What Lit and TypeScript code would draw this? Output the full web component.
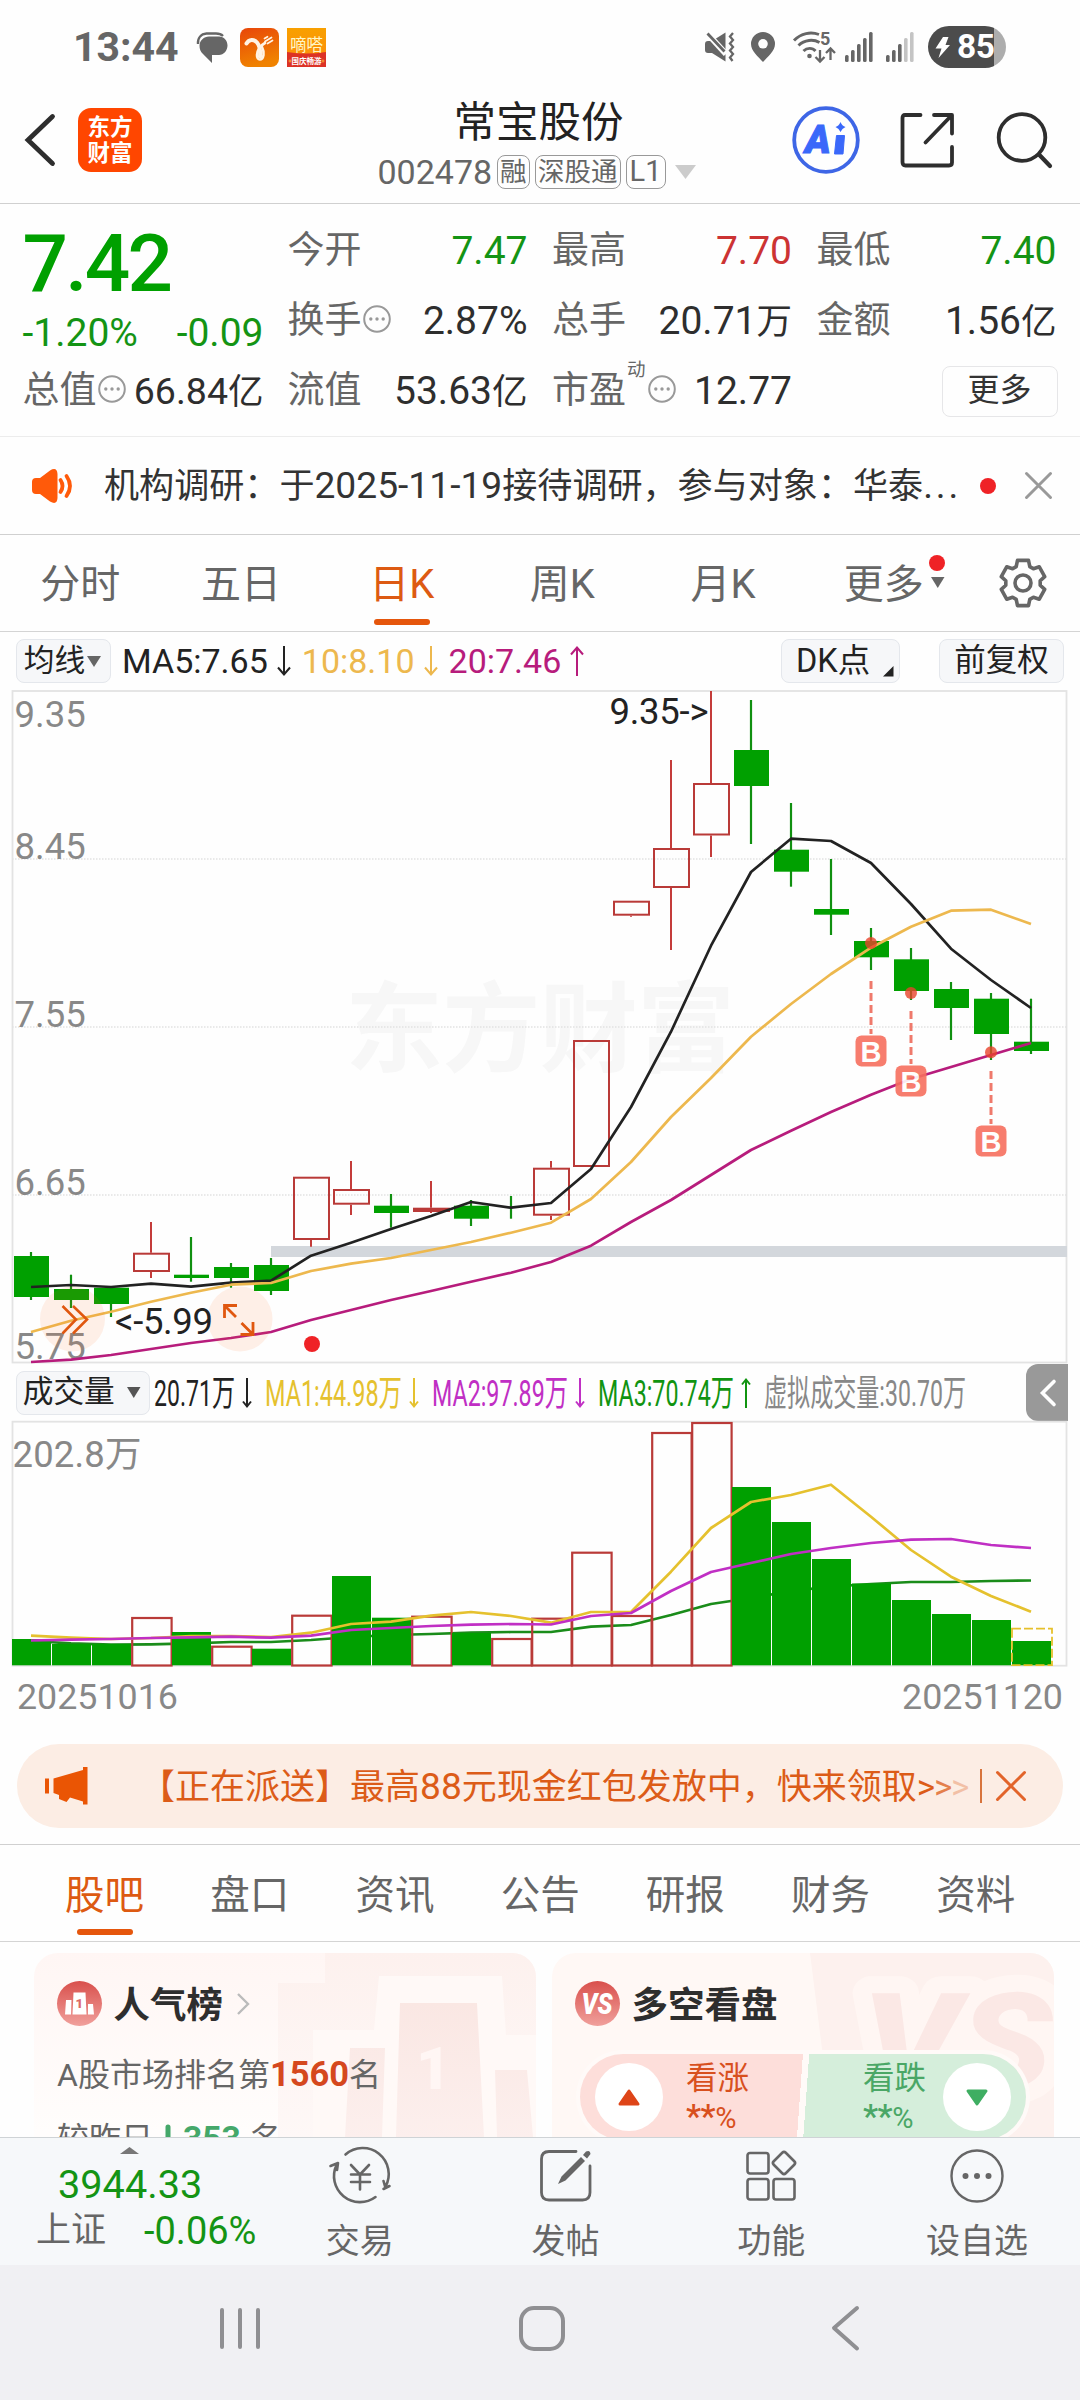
import { LitElement, html, svg, css } from "lit";
import { customElement } from "lit/decorators.js";

const GREEN = "#00a000";
const RED = "#b93a38";
const STEP = 40;
const FIRST = 31;
const cx = (i: number) => FIRST + STEP * i;

type Candle = [up: boolean, high: number, top: number, bottom: number, low: number];

const CANDLES: Candle[] = [
  [false, 1252, 1256, 1297, 1300],
  [false, 1274.7, 1289, 1300, 1308],
  [false, 1287.7, 1287.7, 1304, 1317],
  [true, 1222, 1252.7, 1272, 1278],
  [false, 1237, 1274.7, 1278, 1281.7],
  [false, 1263, 1267, 1278, 1287.7],
  [false, 1258, 1265, 1291, 1295],
  [true, 1176.7, 1176.7, 1240, 1246.7],
  [true, 1161, 1189, 1204.7, 1215],
  [false, 1194, 1205.7, 1213, 1227.7],
  [true, 1181, 1207.7, 1212, 1213],
  [false, 1200, 1205.7, 1218.7, 1226],
  [false, 1196, 1207, 1208, 1218.7],
  [true, 1161, 1167.7, 1215.7, 1220],
  [true, 1040, 1040, 1167, 1167],
  [true, 900.7, 900.7, 915.7, 916.7],
  [true, 760, 848, 888, 950],
  [true, 691, 783, 835.5, 857],
  [false, 700, 750, 786, 844],
  [false, 803, 849.7, 871.7, 886.7],
  [false, 859, 909, 914.7, 935],
  [false, 928, 941, 957.3, 970],
  [false, 948, 959.3, 991, 1000],
  [false, 982, 989, 1008, 1040],
  [false, 993, 998.7, 1034, 1060],
  [false, 998.7, 1041.7, 1051, 1054],
];

const MA5 = [1287, 1285, 1287, 1283.7, 1286.7, 1282.7, 1280.7, 1255.7, 1242.7, 1229, 1216, 1202, 1207.7, 1203, 1169, 1107, 1031.7, 945.7, 872, 838.7, 841, 863, 904, 948.7, 980, 1008];
const MA10 = [1332, 1320.7, 1311.7, 1301.7, 1292.7, 1284.7, 1283, 1271, 1263.7, 1258, 1250, 1242, 1232.7, 1222.7, 1199, 1162, 1117, 1078, 1036.7, 1004, 974, 947.7, 926.7, 910.7, 909.7, 924];
const MA20 = [1362, 1359.7, 1355, 1349, 1343, 1338, 1332, 1320, 1310, 1300, 1291, 1281.7, 1272.7, 1262, 1245.7, 1222, 1200, 1175, 1150, 1130.7, 1112, 1094.7, 1079, 1067, 1055, 1043];

const VOLUMES: [up: boolean, top: number][] = [
  [false, 1639], [false, 1644], [false, 1644], [true, 1617], [false, 1632], [true, 1645.7], [false, 1648.7],
  [true, 1614.7], [false, 1576], [false, 1617.7], [true, 1615.7], [false, 1633], [true, 1638], [true, 1617.7],
  [true, 1551.7], [true, 1615], [true, 1432], [true, 1422], [false, 1487], [false, 1522], [false, 1559],
  [false, 1583.5], [false, 1600], [false, 1614], [false, 1620], [false, 1641],
];
const VMA1 = [1635.7, 1637.7, 1639, 1638, 1636, 1636, 1637, 1632.7, 1624, 1621.7, 1615.7, 1612, 1616, 1622.7, 1612, 1612, 1571.7, 1528, 1502, 1495, 1484.7, 1516.7, 1550, 1576.7, 1596, 1611.7];
const VMA2 = [1640.5, 1639.7, 1639, 1638, 1637.3, 1636.7, 1637.7, 1635.7, 1630, 1628, 1626, 1624.7, 1624, 1624.5, 1616, 1613, 1591, 1572, 1563, 1554, 1548, 1543, 1539.7, 1539, 1545, 1548];
const VMA3 = [1641, 1643.3, 1644.7, 1644.3, 1643.3, 1642, 1642, 1640, 1637, 1635, 1634, 1632.7, 1632, 1632, 1626.7, 1625, 1615, 1604, 1598, 1591, 1586.7, 1584, 1582, 1582, 1581, 1580.5];

const line = (ys: number[], color: string) =>
  svg`<polyline points=${ys.map((y, i) => `${cx(i)},${y}`).join(" ")} fill="none" stroke=${color} stroke-width="2.7" stroke-linejoin="round"/>`;

const arrow = (up: boolean, color: string, w: number) => {
  const h = 30;
  const d = up
    ? `M${w / 2} ${h} V1.5 M1 ${1.5 + w / 2} L${w / 2} 1.5 L${w - 1} ${1.5 + w / 2}`
    : `M${w / 2} 0 V${h - 1.5} M1 ${h - 1.5 - w / 2} L${w / 2} ${h - 1.5} L${w - 1} ${h - 1.5 - w / 2}`;
  return html`<svg class="arrow" width=${w} height=${h} viewBox="0 0 ${w} ${h}"><path d=${d} fill="none" stroke=${color} stroke-width="2"/></svg>`;
};

const caret = (w: number, h: number, color: string) =>
  html`<svg width=${w} height=${h} viewBox="0 0 ${w} ${h}"><path d="M0 0H${w}L${w / 2} ${h}Z" fill=${color}/></svg>`;

@customElement("price-chart")
export class PriceChart extends LitElement {
  static styles = css`
    :host { display: block; height: 675px; }
    svg { display: block; overflow: visible; }
    .axis { font-size: 36.5px; fill: #888; }
    .note { font-size: 36.5px; fill: #222; }
    .mark { font-size: 98px; font-weight: 700; fill: #f7f7f7; }
    .flag { font-size: 29px; font-weight: 700; fill: #fff; font-family: "Liberation Sans", Arial, sans-serif; }
  `;

  private candle([up, high, top, bottom, low]: Candle, i: number) {
    const x = cx(i);
    if (up) {
      const thin = bottom - top < 6;
      return svg`
        <path d="M${x} ${high}V${top}M${x} ${bottom}V${low}" stroke="#c43c3a" stroke-width="2"/>
        <rect x=${x - 17} y=${top + 1} width="35" height=${bottom - top - 2} fill=${thin ? "#c43c3a" : "none"} stroke=${RED} stroke-width="2"/>`;
    }
    const doji = bottom - top < 2;
    return svg`
      <path d="M${x} ${high}V${low}" stroke="#109010" stroke-width="2.2"/>
      ${doji ? "" : svg`<rect x=${x - 17} y=${top} width="35" height=${bottom - top} fill=${GREEN}/>`}`;
  }

  private signal(x: number, dot: number, from: number) {
    return svg`
      <circle cx=${x} cy=${dot} r="6" fill="#e8432c" fill-opacity="0.8"/>
      <path d="M${x} ${from}V${from + 53}" stroke="#ef7a6c" stroke-width="3" stroke-dasharray="8 4"/>
      <g opacity="0.9">
        <rect x=${x - 15.5} y=${from + 54.5} width="31" height="31" rx="6" fill="#f7705f"/>
        <text class="flag" x=${x} y=${from + 80.5} text-anchor="middle">B</text>
      </g>`;
  }

  render() {
    return html`<svg width="1080" height="675" viewBox="0 690 1080 675">
      <text class="mark" x="345" y="1064" textLength="390">东方财富</text>
      <rect x="12.5" y="691" width="1054" height="671.5" fill="none" stroke="#e3e3e3" stroke-width="1.8"/>
      ${[859, 1027, 1195].map((y) => svg`<path d="M12 ${y}H1067" stroke="#e2e2e2" stroke-width="1.5" stroke-dasharray="1.5 1.5"/>`)}
      <text class="axis" x="14.5" y="726.5">9.35</text>
      <text class="axis" x="14.5" y="859">8.45</text>
      <text class="axis" x="14.5" y="1026.7">7.55</text>
      <text class="axis" x="14.5" y="1195">6.65</text>
      <text class="axis" x="14.5" y="1359">5.75</text>
      <rect x="271" y="1246" width="796" height="11" fill="#d3d7dc"/>
      ${CANDLES.map((c, i) => this.candle(c, i))}
      ${line(MA5, "#222")} ${line(MA10, "#edb84e")} ${line(MA20, "#b71c7c")}
      ${this.signal(871, 943, 981)} ${this.signal(911, 993, 1011)} ${this.signal(991, 1052.3, 1071)}
      <circle cx="72.5" cy="1319" r="32.5" fill="#fc6b21" fill-opacity="0.1"/>
      <path d="M62.5 1306l13.5 13.5-13.5 14M73 1306l14 13.5-14 14" fill="none" stroke="#e0570f" stroke-width="2.6"/>
      <circle cx="240" cy="1319" r="32.5" fill="#fc6b21" fill-opacity="0.1"/>
      <path d="M224.5 1318v-12.5H237M225 1306l11 11M253 1322v12.5H240.5M241.5 1323l11 11" fill="none" stroke="#e0570f" stroke-width="2.8"/>
      <text class="note" x="115" y="1333.5" textLength="98">&lt;-5.99</text>
      <text class="note" x="609.5" y="724.3" textLength="99">9.35-&gt;</text>
      <circle cx="312" cy="1344" r="8" fill="#ef2226"/>
    </svg>`;
  }
}

@customElement("volume-chart")
export class VolumeChart extends LitElement {
  static styles = css`
    :host { display: block; height: 248px; }
    svg { display: block; overflow: visible; }
    .axis { font-size: 36.5px; fill: #888; }
  `;
  render() {
    return html`<svg width="1080" height="248" viewBox="0 1420 1080 248">
      <rect x="12.5" y="1421.7" width="1054" height="244" fill="none" stroke="#e3e3e3" stroke-width="1.8"/>
      <text class="axis" x="12.5" y="1466.7" textLength="129">202.8万</text>
      ${line(VMA3, "#1a8c1a")}
      ${VOLUMES.map(([up, top], i) => {
        const x = 11.8 + STEP * i;
        return up
          ? svg`<rect x=${x + 0.4} y=${top + 1} width="39.4" height=${1664.5 - top} fill="none" stroke=${RED} stroke-width="2.2"/>`
          : svg`<rect x=${x + 0.2} y=${top} width="39" height=${1665.3 - top} fill=${GREEN}/>`;
      })}
      <rect x="1012" y="1628.7" width="40" height="36.5" fill="none" stroke="#e6c02c" stroke-width="1.8" stroke-dasharray="9 3"/>
      ${line(VMA1, "#e5c12e")} ${line(VMA2, "#c02fc4")}
    </svg>`;
  }
}

const MORE_DOTS = html`<svg class="dots" width="28" height="28" viewBox="0 0 28 28">
  <circle cx="14" cy="14" r="12.8" fill="none" stroke="#999" stroke-width="2"/>
  <circle cx="7.8" cy="14" r="1.7" fill="#999"/><circle cx="14" cy="14" r="1.7" fill="#999"/><circle cx="20.2" cy="14" r="1.7" fill="#999"/>
</svg>`;

const gearPath = (() => {
  const pts: string[] = [];
  for (let k = 0; k < 6; k++) {
    for (const [da, r] of [[-23, 17.3], [-14, 22.6], [14, 22.6], [23, 17.3]]) {
      const a = ((k * 60 - 90 + da) * Math.PI) / 180;
      pts.push(`${(24 + r * Math.cos(a)).toFixed(1)} ${(25 + r * 1.03 * Math.sin(a)).toFixed(1)}`);
    }
  }
  return `M${pts.join("L")}Z`;
})();

@customElement("app-root")
export class AppRoot extends LitElement {
  static styles = css`
    :host {
      display: flex; flex-direction: column; width: 1080px; height: 2400px; overflow: hidden;
      background: #fefefe; color: #333; line-height: 1.2;
      font-family: Roboto, "Noto Sans CJK SC", sans-serif;
    }
    * { box-sizing: border-box; }
    svg { display: block; flex: none; overflow: visible; }
    div, section, header, nav { flex: none; }
    .row { display: flex; align-items: center; white-space: nowrap; }

    .status { height: 94px; padding: 0 74px 0 73px; color: #666; }
    .time { width: 123px; font-size: 41px; font-weight: 700; line-height: 94px; }
    .app { width: 39px; height: 39px; margin-left: 12px; }
    .app2 { margin-left: 8px; }
    .right { margin-left: auto; }
    .battery {
      width: 78px; height: 42px; margin-left: 14px; border-radius: 21px; padding-left: 7px; color: #fff;
      font-size: 33.5px; font-weight: 700; background: linear-gradient(90deg, #4c4c4c 66px, #adadad 66px);
    }
    .battery span { margin-left: 7px; letter-spacing: -0.5px; }

    .head { display: flex; height: 110px; border-bottom: 1px solid #d0d0d0; padding: 0 28px 0 25px; justify-content: space-between; }
    .side { height: 92px; }
    .left { width: 300px; }
    .logo {
      width: 64px; height: 64px; margin-left: 23px; padding-top: 6px; border-radius: 13px; background: #ff4600;
      color: #fff; font-size: 22.5px; line-height: 26px; font-weight: 700; text-align: center; white-space: normal;
    }
    .tools { width: 300px; justify-content: flex-end; }
    .title { font-size: 42.5px; line-height: 53px; padding-top: 2px; color: #222; text-align: center; }
    .code { margin-top: 6px; height: 34px; justify-content: center; margin-left: -4px; color: #666; font-size: 34px; line-height: 34px; }
    .tag { height: 34px; margin-left: 4.5px; padding: 0 2.5px; border: 1.5px solid #999; border-radius: 8px; font-size: 26.5px; line-height: 31px; }
    .tag.l { font-size: 29px; padding: 0 3px; }

    .quote { height: 233px; padding: 12px 22px 0 22.5px; display: flex; gap: 24px; border-bottom: 1px solid #ececec; font-size: 39px; }
    .now { width: 241px; }
    .price { font-size: 80px; font-weight: 500; line-height: 97px; height: 94px; color: #00a000; letter-spacing: -2.7px; }
    .chg { height: 46px; justify-content: space-between; color: #149414; }
    .grid { flex: 1; display: grid; grid-template-columns: repeat(3, 240px); grid-auto-rows: 70px; column-gap: 24.5px; }
    .cell { height: 70px; justify-content: space-between; }
    .k { color: #666; font-size: 37px; display: flex; align-items: center; }
    .v { color: #2e2e2e; }
    .u { font-size: 35.5px; }
    .now .v { font-size: 37.5px; }
    .down { color: #149414; }
    .up { color: #cc3333; }
    .cell .dots { margin: -4px 0 0 1px; }
    .sup { font-size: 18.5px; align-self: flex-start; margin: -10px 1px 0 1px; }
    .more { width: 116px; height: 51px; border: 1.5px solid #e6e6e8; border-radius: 8px; font-size: 32px; line-height: 47px; text-align: center; margin-left: auto; position: relative; right: -1px; }

    .news { height: 98px; border-bottom: 1px solid #d0d0d0; padding: 0 29px 0 32px; font-size: 35px; color: #333; }
    .news .txt { margin-left: 31px; width: 876px; font-size: 35.1px; }
    .n { font-size: 37.2px; }
    .etc { letter-spacing: 2.8px; }
    .dot { width: 16px; height: 16px; border-radius: 50%; background: #ef2226; }
    .news svg:last-child { margin-left: 29px; }

    .tabs { height: 97px; border-bottom: 1px solid #d4d4d4; color: #666; font-size: 40px; }
    .tab { position: relative; width: 160.7px; text-align: center; line-height: 100px; height: 96px; }
    .tab.on, .tab2.on { color: #dd5a12; }
    .tab.on::after, .tab2.on::after {
      content: ""; position: absolute; left: 50%; bottom: 6px; width: 56px; height: 6px; margin-left: -28px; border-radius: 3px; background: #e5560c;
    }
    .badge { position: absolute; left: 126px; top: 20px; }
    .badge svg { margin: 6px 0 0 2px; }
    .gear { margin-left: 35px; }

    .chip { display: flex; align-items: center; justify-content: center; height: 44px; border: 1.5px solid #e4e7ec; border-radius: 8px; background: #f6f7f9; color: #222; font-size: 30.7px; }
    .ma { height: 58px; padding: 0 16px; font-size: 34px; }
    .ma .arrow { margin: 0 11px 0 9px; }
    .avg { width: 95px; margin-right: 11px; gap: 2px; padding-right: 2px; }
    .dk { width: 119px; margin-left: auto; font-size: 32.5px; justify-content: flex-start; padding-left: 14px; position: relative; }
    .dk svg { position: absolute; right: 6px; bottom: 6px; }
    .fq { width: 125px; margin-left: 39px; font-size: 31.5px; }

    .vol { height: 55px; padding: 0 12px 0 16px; font-size: 36px; }
    .vol .arrow { margin: 0 13px 0 7px; }
    .vchip { width: 134px; margin-right: 4px; gap: 12px; padding-right: 3px; }
    .fold { width: 42px; height: 57px; margin-left: auto; border-radius: 12px 0 0 12px; background: #999; justify-content: center; }

    .dates { height: 58px; padding: 0 17px 0 17px; justify-content: space-between; color: #888; font-size: 35.8px; }
    .promo { height: 84px; margin: 18px 17px 16px; padding: 0 37px 0 28px; border-radius: 42px; background: #fcede4; color: #dc5c18; font-size: 35px; }
    .promo .txt { margin-left: 52px; width: 832px; }
    .gt { letter-spacing: -1.2px; }
    .f2 { opacity: 0.75; }
    .f3 { opacity: 0.3; }
    .sep { width: 1.5px; height: 34px; margin: 0 14.5px 0 8px; background: #d8743c; }

    .tabs2 { height: 98px; border-top: 1px solid #d0d0d0; border-bottom: 1px solid #d4d4d4; padding-left: 32px; color: #666; font-size: 39.5px; }
    .tab2 { position: relative; width: 145.2px; height: 96px; line-height: 102px; text-align: center; }

    .cards { display: flex; gap: 16px; height: 195px; padding: 11px 26px 0 34px; overflow: hidden; }
    .card { position: relative; width: 502px; height: 260px; padding: 28px 0 0 23px; border-radius: 24px; overflow: hidden; background: linear-gradient(#fff6f4, #fffdfc 180px); }
    .card.b { background: #fff8f5; }
    .decor { position: absolute; left: 0; top: 0; }
    .ct { position: relative; height: 45px; font-size: 36.5px; font-weight: 700; color: #2e2e2e; }
    .ct span { margin-left: 11.5px; padding-top: 5px; }
    .ct svg + span + svg { margin-left: 14px; }
    .rank { position: relative; margin-top: 27px; height: 44px; font-size: 32px; color: #666; }
    .rank b { color: #d5481e; font-size: 34.5px; }
    .rank.r2 { margin-top: 20px; }
    .rank.r2 b { color: #45a86a; margin: 0 9px 0 9px; font-size: 33.5px; }
    .rank.r2 svg { margin-left: 9px; }
    .pill {
      position: relative; width: 446px; height: 86px; margin: 28px 0 0 5px; border-radius: 43px; padding: 0 15px; font-size: 31.5px;
      box-shadow: 0 0 0 4px #fffaf8;
      background: linear-gradient(94.1deg, #fddeda 49.3%, #fffaf8 49.3% 50.7%, #d5eedb 50.7%);
    }
    .knob { width: 68px; height: 68px; border-radius: 50%; background: #fff; display: flex; align-items: center; justify-content: center; }
    .bull { color: #d8501e; margin-left: 23px; line-height: 37px; padding-top: 3px; }
    .bear { color: #4aa766; margin: 0 17px 0 auto; line-height: 37px; padding-top: 3px; }
    .pct { font-size: 29px; line-height: 38px; }
    .pct i { font-style: normal; font-size: 34px; font-weight: 500; letter-spacing: -0.5px; }

    .bar { display: flex; height: 128px; border-top: 1px solid #cfd3d6; background: #f6f8fa; color: #666; font-size: 34px; }
    .index { width: 257px; height: 127px; position: relative; }
    .index .c { margin: 9px 0 0 120px; }
    .index .p { color: #149414; font-size: 39.7px; line-height: 46px; margin: 8px 0 0 58px; }
    .index .q { font-size: 35px; line-height: 46px; padding-left: 36px; }
    .index .q span { color: #149414; font-size: 38px; margin-left: 38px; }
    .act { width: 205.7px; display: flex; flex-direction: column; align-items: center; padding-top: 10px; }
    .act div { margin-top: 16px; line-height: 43px; }
    .nav { height: 135px; background: #f0f0f3; padding: 0 0 7px 218px; }
  `;

  private squeezed(text: string, w: number, color: string) {
    return html`<svg width=${w} height="44" viewBox="0 0 ${w} 44"><text x="0" y="34.8" font-size="36" fill=${color} textLength=${w} lengthAdjust="spacingAndGlyphs">${text}</text></svg>`;
  }

  private bars(active: number) {
    return html`<svg width="28" height="30" viewBox="0 0 28 30" style="margin-left:${active > 3 ? 9 : 13}px">
      ${[23, 18, 12, 6, 0].map((y, i) => svg`<rect x=${i * 6} y=${y} width="3.6" height=${30 - y} rx="1.5" fill=${i < active ? "#666" : "#c4c4c4"}/>`)}
    </svg>`;
  }

  private cell(k: unknown, v: string, cls = "v") {
    const unit = /[万亿]$/.test(v) ? v.slice(-1) : "";
    const num = unit ? v.slice(0, -1) : v;
    return html`<div class="row cell"><span class="k">${k}</span><span class=${cls}>${num}${unit ? html`<span class="u">${unit}</span>` : ""}</span></div>`;
  }

  render() {
    return html`
      <div class="row status">
        <div class="time">13:44</div>
        <svg width="32" height="31" viewBox="0 0 32 31">
          <path d="M2 12C1.500 6 5 2 10.500 1.500h9.500c3.500 0 5.500 1 7 2.500" fill="none" stroke="#666" stroke-width="2.400"/>
          <path d="M13 4.500h10c5 0 8.500 4 8.500 9s-3.800 9.500-8.500 9.500h-7v8L7 22C4.500 20 3.500 17 3.500 13.500c0-5 4.500-9 9.500-9Z" fill="#666"/>
        </svg>
        <svg class="app" viewBox="0 0 39 39">
          <defs><linearGradient id="a" x1="0" y1="0" x2="0.300" y2="1"><stop offset="0" stop-color="#e8460a"/><stop offset="1" stop-color="#f08200"/></linearGradient></defs>
          <rect width="39" height="39" rx="8" fill="url(#a)"/>
          <path d="M6.500 15.500C9 11 14 11 17 14.500c2.500 3 3.500 8 3 14" fill="none" stroke="#fff3e4" stroke-width="4" stroke-linecap="round"/>
          <path d="M25 15c-4.500 2.500-7.500 7-8 12-.300 6 5.500 6 6.500 0 .500-3-.500-6-1.500-8" fill="none" stroke="#fff3e4" stroke-width="2.600" stroke-linecap="round"/>
          <path d="M25 13.500l6.500-4M27.500 15.500l5-3M24.500 10.500l3-1.800" stroke="#fff3e4" stroke-width="1.700" stroke-linecap="round"/>
        </svg>
        <svg class="app app2" viewBox="0 0 39 39">
          <defs><linearGradient id="d" x1="0" y1="0" x2="0" y2="1"><stop offset="0" stop-color="#f8a000"/><stop offset="1" stop-color="#ff8a10"/></linearGradient></defs>
          <rect width="39" height="39" fill="url(#d)"/>
          <path d="M0 24q19.500 3 39 0v15H0Z" fill="#dc3226"/>
          <text x="19.500" y="22.500" font-size="16.500" fill="#fff6c8" text-anchor="middle">嘀嗒</text>
          <text x="19.500" y="36" font-size="7.500" font-weight="700" fill="#fff" text-anchor="middle">国庆畅游</text>
          <path d="M1.500 33h3M3 31.500v3M34.500 33h3M36 31.500v3" stroke="#f5a030" stroke-width="1.200"/>
        </svg>
        <svg class="right" width="30" height="30" viewBox="0 0 30 30">
          <path d="M0 12q0-3 3-3h4l13.500-8.500v29L7 21H3q-3 0-3-3Z" fill="#666"/>
          <path d="M1 0l20 22" stroke="#fefefe" stroke-width="6"/><path d="M2.500 1.500l17 18" stroke="#666" stroke-width="2.800"/>
          <path d="M28 1l-3 3.500 3 3.500-3 3.500 3 3.500-3 3.500 3 3.500-3 3.500 2.500 3.500" fill="none" stroke="#666" stroke-width="2.300"/>
        </svg>
        <svg width="24" height="30" viewBox="0 0 24 30" style="margin-left:16px"><path d="M12 0a12 12 0 0 1 12 12c0 7-7 12.500-12 18C7 24.500 0 19 0 12A12 12 0 0 1 12 0Z" fill="#666"/><circle cx="12" cy="11.800" r="4.800" fill="#fefefe"/></svg>
        <svg width="43" height="32" viewBox="0 0 43 32" style="margin-left:18px">
          <g fill="none" stroke="#666" stroke-width="2.900"><path d="M1 9.500C8 2 18 .500 26 3.500M5.500 14.500c6-6 15-6.500 21-3M10.500 20c3.500-3.500 9-3.500 12 0"/>
          <path d="M27 19v11M22.500 26l4.500 4.500 4.500-4.500M37.500 29V18M33 22l4.500-4.500L42 22" stroke-width="2.300"/></g>
          <circle cx="16.500" cy="25" r="2.300" fill="#666"/><text x="27" y="14" font-size="18" font-weight="700" fill="#666">5</text>
        </svg>
        ${this.bars(5)} ${this.bars(3)}
        <div class="row battery">
          <svg width="15" height="21" viewBox="0 0 15 21"><path d="M8 0h5.500l-3 8H15L3.500 21l3-9.500H.500Z" fill="#fff"/></svg><span>85</span>
        </div>
      </div>

      <header class="head">
        <div class="row side left">
          <svg width="30" height="52" viewBox="0 0 30 52"><path d="M27.500 2.500L3 26l24.500 23.500" fill="none" stroke="#2e2e2e" stroke-width="4.800" stroke-linecap="round"/></svg>
          <div class="logo">东方<br>财富</div>
        </div>
        <div>
          <div class="title">常宝股份</div>
          <div class="row code">002478<span class="tag">融</span><span class="tag">深股通</span><span class="tag l">L1</span>
            <svg width="21" height="14" viewBox="0 0 21 14" style="margin-left:9px"><path d="M0 0H21L10.500 14Z" fill="#ccc"/></svg>
          </div>
        </div>
        <div class="row side tools">
          <svg width="68" height="68" viewBox="0 0 68 68">
            <circle cx="34" cy="34" r="31.800" fill="none" stroke="#3e66e6" stroke-width="3.800"/>
            <text x="13" y="47" font-size="39" font-weight="900" font-style="italic" fill="#3a68fa" stroke="#3a68fa" stroke-width="1">A</text>
            <path d="M44.500 29.500h8l-1.500 18.500h-8.500Z" fill="#3a68fa" stroke="#3a68fa" stroke-linejoin="round"/>
            <path d="M48.500 16q1.500 4 5 5-3.500 1.500-5 5-1.500-3.500-5-5 3.500-1 5-5Z" fill="#3a68fa"/>
          </svg>
          <svg width="55" height="56" viewBox="0 0 55 56" style="margin-left:40px">
            <g fill="none" stroke="#2e2e2e" stroke-width="3.800" stroke-linecap="round" stroke-linejoin="round"><path d="M20.500 3H5Q2.500 3 2.500 6v44q0 3.500 3 3.500h43.500q3 0 3-3V35M34 3h18v18.500M51 4L25.500 30.500"/></g>
          </svg>
          <svg width="55" height="56" viewBox="0 0 55 56" style="margin-left:42px"><circle cx="25" cy="25.500" r="23.300" fill="none" stroke="#2e2e2e" stroke-width="3.800"/><path d="M42 42.500L53 54" stroke="#2e2e2e" stroke-width="4.200" stroke-linecap="round"/></svg>
        </div>
      </header>

      <section class="quote">
        <div class="now">
          <div class="price">7.42</div>
          <div class="row chg"><span>-1.20%</span><span>-0.09</span></div>
          ${this.cell(html`总值${MORE_DOTS}`, "66.84亿")}
        </div>
        <div class="grid">
          ${this.cell("今开", "7.47", "down")} ${this.cell("最高", "7.70", "up")} ${this.cell("最低", "7.40", "down")}
          ${this.cell(html`换手${MORE_DOTS}`, "2.87%")} ${this.cell("总手", "20.71万")} ${this.cell("金额", "1.56亿")}
          ${this.cell("流值", "53.63亿")} ${this.cell(html`市盈<span class="sup">动</span>${MORE_DOTS}`, "12.77")}
          <div class="row cell"><div class="more">更多</div></div>
        </div>
      </section>

      <div class="row news">
        <svg width="41" height="34" viewBox="0 0 41 34">
          <path d="M0 13q0-4 4-4h4L18 1.500Q25-2.500 25.500 5v24Q25 36.500 18 32.500L8 25H4q-4 0-4-4Z" fill="#ff5a0a"/>
          <path d="M28.500 11q4 6 0 12M34.500 7q7 10 0 20" fill="none" stroke="#ff5a0a" stroke-width="3.800" stroke-linecap="round"/>
        </svg>
        <div class="txt">机构调研：于<span class="n">2025-11-19</span>接待调研，参与对象：华泰<span class="n etc">...</span></div>
        <div class="dot"></div>
        <svg width="27" height="27" viewBox="0 0 27 27"><path d="M1.500 1.500l24 24M25.500 1.500l-24 24" stroke="#999" stroke-width="3" stroke-linecap="round"/></svg>
      </div>

      <nav class="row tabs">
        <div class="tab">分时</div><div class="tab">五日</div><div class="tab on">日K</div><div class="tab">周K</div><div class="tab">月K</div>
        <div class="tab">更多<div class="badge"><div class="dot"></div>${caret(13.5, 11, "#666")}</div></div>
        <svg class="gear" width="48" height="50" viewBox="0 0 48 50"><path d=${gearPath} fill="none" stroke="#666" stroke-width="3.600" stroke-linejoin="round"/><circle cx="24" cy="25" r="8" fill="none" stroke="#666" stroke-width="3.600"/></svg>
      </nav>

      <div class="row ma">
        <div class="chip avg">均线${caret(14, 11, "#666")}</div>
        <span style="color:#222">MA5:7.65</span>${arrow(false, "#222", 14)}
        <span style="color:#edb84e">10:8.10</span>${arrow(false, "#edb84e", 14)}
        <span style="color:#b71c7c">20:7.46</span>${arrow(true, "#b71c7c", 14)}
        <div class="chip dk">DK点<svg width="10.500" height="10.500" viewBox="0 0 10 10"><path d="M10 0V10H0Z" fill="#222"/></svg></div>
        <div class="chip fq">前复权</div>
      </div>
      <price-chart></price-chart>

      <div class="row vol">
        <div class="chip vchip">成交量${caret(13.5, 11, "#555")}</div>
        ${this.squeezed("20.71万", 81, "#222")}${arrow(false, "#222", 10)}
        ${this.squeezed("MA1:44.98万", 137, "#e5c12e")}${arrow(false, "#e5c12e", 10)}
        ${this.squeezed("MA2:97.89万", 136, "#c02fc4")}${arrow(false, "#c02fc4", 10)}
        ${this.squeezed("MA3:70.74万", 136, "#109410")}${arrow(true, "#109410", 10)}
        ${this.squeezed("虚拟成交量:30.70万", 202, "#888")}
        <div class="row fold"><svg width="17" height="28" viewBox="0 0 17 28"><path d="M15 2.500L3.500 14 15 25.500" fill="none" stroke="#fff" stroke-width="3.600" stroke-linecap="round"/></svg></div>
      </div>
      <volume-chart></volume-chart>
      <div class="row dates"><span>20251016</span><span>20251120</span></div>

      <div class="row promo">
        <svg width="43" height="38" viewBox="0 0 43 38"><path d="M0 11.500h4v15H0ZM8.500 11.500L38 3V0h4.500v37.500H38v-3l-13-4-3.500 4.500-7.500-3V28l-5.500-2Z" fill="#ea5504"/></svg>
        <div class="txt">【正在派送】最高<span class="n">88</span>元现金红包发放中，快来领取<span class="gt">&gt;<span class="f2">&gt;</span><span class="f3">&gt;</span></span></div>
        <div class="sep"></div>
        <svg width="30" height="30" viewBox="0 0 30 30"><path d="M1.500 1.500l27 27M28.500 1.500l-27 27" stroke="#e2642a" stroke-width="3" stroke-linecap="round"/></svg>
      </div>

      <nav class="row tabs2">
        ${["股吧", "盘口", "资讯", "公告", "研报", "财务", "资料"].map((t, i) => html`<div class="tab2 ${i === 0 ? "on" : ""}">${t}</div>`)}
      </nav>

      <section class="cards">
        <div class="card">
          <svg class="decor" width="502" height="184" viewBox="34 1953 502 184">
            <defs>
              <linearGradient id="o" x1="0" y1="0" x2="0" y2="1"><stop offset="0" stop-color="#fdf1ee"/><stop offset="1" stop-color="#fef8f7"/></linearGradient>
              <linearGradient id="p" x1="0" y1="0" x2="0" y2="1"><stop offset="0" stop-color="#fae7e3"/><stop offset="1" stop-color="#fcefed"/></linearGradient>
            </defs>
            <path d="M325 1953V1983H278V2137H536V1953Z" fill="url(#o)"/>
            <path d="M379 1976H502L506 2035H536V2137H313V2030H374Z" fill="#fff9f7"/>
            <path d="M400 2003H477L484 2137H396ZM350 2048H385L382 2137H345ZM495 2070H527L533 2137H497Z" fill="url(#p)"/>
            <text x="416" y="2089" font-size="60" font-weight="900" fill="#fff6f4">1</text>
          </svg>
          <div class="row ct">
            <svg width="45" height="45" viewBox="0 0 45 45"><defs><linearGradient id="c" x1="0" y1="0" x2="0" y2="1"><stop offset="0" stop-color="#d9504c"/><stop offset="1" stop-color="#f0a09c"/></linearGradient></defs>
              <circle cx="22.500" cy="22.500" r="22.500" fill="url(#c)"/><path d="M16.500 11.500h12l1 22H15.500ZM9 19h5.500l-.500 14.500H8ZM31 23h5l1 10.500h-6Z" fill="#fff"/>
              <text x="22.300" y="27" font-size="13" font-weight="900" fill="#dc6a66" text-anchor="middle">1</text></svg>
            <span>人气榜</span>
            <svg width="12" height="22" viewBox="0 0 12 22"><path d="M1 1l10 10L1 21" fill="none" stroke="#bbb" stroke-width="2.400"/></svg>
          </div>
          <div class="row rank">A股市场排名第<b>1560</b>名</div>
          <div class="row rank r2">较昨日<svg width="12" height="30" viewBox="0 0 12 30"><path d="M6 3V25M1 20l5 6 5-6" fill="none" stroke="#45a86a" stroke-width="5" stroke-linecap="round"/></svg><b>353</b>名</div>
        </div>
        <div class="card b">
          <svg class="decor" width="502" height="184" viewBox="552 1953 502 184">
            <path d="M810 1953H1054V2137H833Z" fill="#fdf1ee"/>
            <text x="862" y="2088" font-size="134" font-weight="900" font-style="italic" fill="#fbe8e5" stroke="#fff6f3" stroke-width="34" stroke-linejoin="round" paint-order="stroke" textLength="190" lengthAdjust="spacingAndGlyphs">VS</text>
          </svg>
          <div class="row ct">
            <svg width="45" height="45" viewBox="0 0 45 45"><circle cx="22.500" cy="22.500" r="22.500" fill="url(#v)"/><defs><linearGradient id="v" x1="0" y1="0" x2="0" y2="1"><stop offset="0" stop-color="#d9504c"/><stop offset="1" stop-color="#f0a09c"/></linearGradient></defs>
              <text x="22" y="33" font-size="29" font-weight="900" font-style="italic" fill="#fff" text-anchor="middle" textLength="31" lengthAdjust="spacingAndGlyphs">VS</text></svg>
            <span>多空看盘</span>
          </div>
          <div class="row pill">
            <div class="knob"><svg width="22" height="17" viewBox="0 0 22 17"><path d="M11 2L20 15H2Z" fill="#de4518" stroke="#de4518" stroke-width="3" stroke-linejoin="round"/></svg></div>
            <div class="bull">看涨<div class="pct"><i>**</i>%</div></div>
            <div class="bear">看跌<div class="pct"><i>**</i>%</div></div>
            <div class="knob"><svg width="22" height="17" viewBox="0 0 22 17"><path d="M11 15L2 2H20Z" fill="#3fae62" stroke="#3fae62" stroke-width="3" stroke-linejoin="round"/></svg></div>
          </div>
        </div>
      </section>

      <div class="bar">
        <div class="index">
          <svg class="c" width="19" height="7" viewBox="0 0 19 7"><path d="M0 7L9.500 0 19 7Z" fill="#777"/></svg>
          <div class="p">3944.33</div>
          <div class="row q">上证<span>-0.06%</span></div>
        </div>
        <div class="act">
          <svg width="62" height="56" viewBox="0 0 62 56"><g fill="none" stroke="#666" stroke-width="2.600" stroke-linecap="round" stroke-linejoin="round">
            <path d="M16.500 6.500A26 26 0 0 1 56.500 38.500M56.500 40l-2-7M54.500 41l6-3"/><path d="M46.500 49A26 26 0 0 1 7.500 17M1.500 18l7.500-3M9 15l-1 7"/>
            <path d="M22 17l9 9.500 9-9.500M22 26.500h19M22 34h19M31 26.500v15"/></g></svg>
          <div>交易</div>
        </div>
        <div class="act">
          <svg width="54" height="56" viewBox="0 0 54 56"><g fill="none" stroke="#666" stroke-width="2.800" stroke-linecap="round"><path d="M37 3.500H10Q2.500 3.500 2.500 11V44.500Q2.500 52 10 52H43.500Q51 52 51 44.500V18"/></g>
            <path d="M19 36l3.500-7.500L42 9l4 4L26.500 32.500ZM44 7l3-3.500q4-2 4.500 2.500L48 10.500Z" fill="#666"/></svg>
          <div>发帖</div>
        </div>
        <div class="act">
          <svg width="50" height="56" viewBox="0 0 50 56"><g fill="none" stroke="#666" stroke-width="2.600"><rect x="1.500" y="5" width="21" height="20.500" rx="2.500"/><rect x="1.500" y="31" width="21" height="20.500" rx="2.500"/><rect x="27.500" y="31" width="21" height="20.500" rx="2.500"/><rect x="29.500" y="6.500" width="17" height="17" rx="2.500" transform="rotate(45 38 15)"/></g></svg>
          <div>功能</div>
        </div>
        <div class="act">
          <svg width="54" height="56" viewBox="0 0 54 56"><circle cx="27" cy="28" r="25.500" fill="none" stroke="#666" stroke-width="2.400"/><circle cx="15.500" cy="28" r="3" fill="#666"/><circle cx="27" cy="28" r="3" fill="#666"/><circle cx="38.500" cy="28" r="3" fill="#666"/></svg>
          <div>设自选</div>
        </div>
      </div>

      <div class="row nav">
        <svg width="44" height="46" viewBox="0 0 44 46"><path d="M4 4V41M22 4V41M40 4V41" stroke="#8f8f92" stroke-width="4" stroke-linecap="round"/></svg>
        <svg width="48" height="46" viewBox="0 0 48 46" style="margin-left:256px"><rect x="3" y="2" width="42" height="41" rx="13" fill="none" stroke="#8f8f92" stroke-width="4"/></svg>
        <svg width="30" height="46" viewBox="0 0 30 46" style="margin-left:264px"><path d="M27 2L4 22l23 20.500" fill="none" stroke="#8f8f92" stroke-width="4" stroke-linecap="round" stroke-linejoin="round"/></svg>
      </div>
    `;
  }
}
